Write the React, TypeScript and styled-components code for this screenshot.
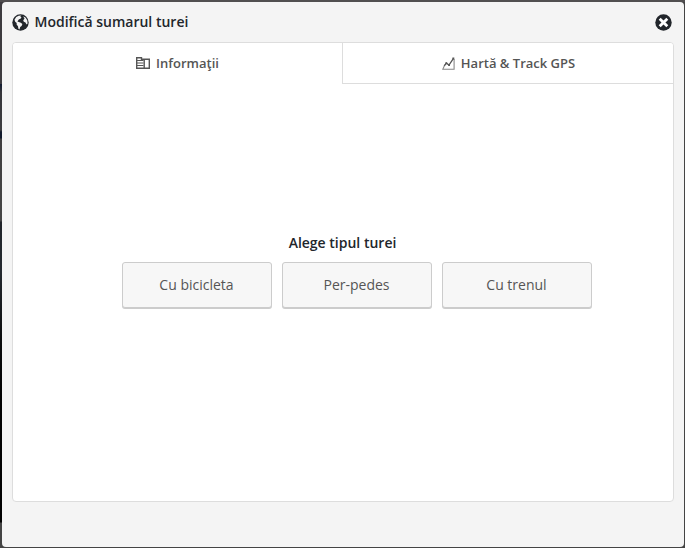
import React from "react";
import styled, { createGlobalStyle } from "styled-components";

const GlobalStyle = createGlobalStyle`
  * { box-sizing: border-box; }
  html, body, #root { height: 100%; }
  body {
    margin: 0;
    overflow: hidden;
    font-family: "Open Sans", sans-serif;
    color: #22262b;
  }
`;

const Backdrop = styled.div`
  height: 100%;
  padding: 2px 1px 1px 2px;
  background:
    linear-gradient(#514f50, #514f50) 0 0 / 100% 2px no-repeat,
    linear-gradient(#444, #444) 100% 0 / 4px 100% no-repeat,
    linear-gradient(#444, #444) 0 100% / 100% 4px no-repeat,
    linear-gradient(#3d3b3f 0, #3d3b3f 84px, #101a30 84px, #35353a 92px, #3d3d3f 130px, #111a2c 132px, #111a2c 138px, #403f40 139px, #444 221px, #20242a 222px, #252a30 270px, #0c0d0e 340px, #020202 400px, #020202 522px, #444 523px);
`;

const Dialog = styled.section`
  display: flex;
  flex-direction: column;
  height: 100%;
  padding: 0 10px 45px;
  background: #f4f4f4;
  border-radius: 4px;
`;

const Header = styled.header`
  display: flex;
  align-items: center;
  height: 40px;
  flex: none;
`;

const Title = styled.h1`
  flex: 1;
  margin: 0 0 0 5.5px;
  font-size: 14px;
  line-height: 20px;
  font-weight: 600;
`;

const CloseButton = styled.button`
  display: flex;
  margin: 0 2px 0 0;
  padding: 0;
  border: 0;
  background: none;
`;

const Panel = styled.div`
  display: flex;
  flex-direction: column;
  flex: 1;
  background: #fff;
  border: 1px solid #ddd;
  border-radius: 4px;
  overflow: hidden;
`;

const Tabs = styled.nav`
  display: flex;
  height: 41px;
  flex: none;
`;

const Tab = styled.button<{ $active?: boolean }>`
  flex: ${(p) => (p.$active ? "0 0 329px" : "1")};
  display: flex;
  align-items: center;
  justify-content: center;
  gap: 6px;
  padding: ${(p) => (p.$active ? "0 0 1px" : "0 0 0 1px")};
  border: 0;
  border-left: ${(p) => (p.$active ? "0" : "1px solid #ddd")};
  border-bottom: ${(p) => (p.$active ? "0" : "1px solid #ddd")};
  background: #fff;
  color: #555;
  font: 600 13px/20px "Open Sans", sans-serif;
`;

const Content = styled.main`
  display: flex;
  flex-direction: column;
  align-items: center;
  padding-top: 149px;
`;

const Prompt = styled.h2`
  margin: 0 1px 9px 0;
  font-size: 14px;
  line-height: 20px;
  font-weight: 600;
`;

const Choices = styled.div`
  display: flex;
  gap: 10px;
  margin-left: 28px;
`;

const Choice = styled.button`
  width: 150px;
  height: 46px;
  padding: 0 1px 1px 0;
  border: 1px solid #ccc;
  border-radius: 3px;
  box-shadow: 0 1px 0 #ccc;
  background: #f7f7f7;
  color: #555;
  font: 400 14px/20px "Open Sans", sans-serif;
`;

const GlobeIcon = () => (
  <svg width="17" height="17" viewBox="0 0 17 17">
    <circle cx="8.5" cy="8.5" r="8.2" fill="#22262b" />
    <path
      d="M4.2 3.1 6.6 1.7 9.4 1.5 8.3 2.5 9.5 3.6 8.2 5 7 5.2 6.1 6.5 5.4 7.4 6.8 8 8.8 8.7 10.4 10 9.6 12 8.2 13.1 7.5 15.4 6.4 14.8 6 12.2 4.6 10.6 4.7 9 3.2 7.7 2.5 5.8Z M11.2 2.2 13.7 3.8 15.3 6.4 15.6 9.5 14.5 10.4 13.5 8.5 11.8 7.8 11.2 6.2 12.5 4.8Z"
      fill="#f4f4f4"
    />
  </svg>
);

const CloseIcon = () => (
  <svg width="17" height="17" viewBox="0 0 17 17">
    <circle cx="8.5" cy="8.5" r="8.2" fill="#22262b" />
    <path d="m4.7 4.7 7.6 7.6m0-7.6-7.6 7.6" stroke="#fff" strokeWidth="2.8" />
  </svg>
);

const InfoIcon = () => (
  <svg width="14" height="12" viewBox="0 0 14 12" fill="none" stroke="#555">
    <path d="M.7 11.3V.7h4.8v1.6h7.8v9Z" strokeWidth="1.4" />
    <path d="M1 3.5h6.5M1 6h6.5M1 8.5h6.5" strokeWidth="1.2" />
    <path d="M8.2 2.5V11" strokeWidth="1.4" />
  </svg>
);

const ChartIcon = () => (
  <svg width="13" height="13" viewBox="0 0 13 13" fill="none">
    <path d="M2.7 8 .8 12.3h11.3V2" stroke="#888" strokeWidth="1.1" />
    <path d="m2.2 8.7 2.2-2.5 2.6 1.9L11.3 1.6" stroke="#555" strokeWidth="1.3" />
    <path d="M3.4 5.3h1.8v1.8H3.4ZM6.2 7.2H8V9H6.2ZM10.4.5h1.9v1.9h-1.9Z" fill="#555" />
  </svg>
);

const tourTypes = ["Cu bicicleta", "Per-pedes", "Cu trenul"];

export default function App() {
  return (
    <>
      <GlobalStyle />
      <Backdrop>
        <Dialog role="dialog" aria-labelledby="dialog-title">
          <Header>
            <GlobeIcon />
            <Title id="dialog-title">Modifică sumarul turei</Title>
            <CloseButton aria-label="Închide">
              <CloseIcon />
            </CloseButton>
          </Header>
          <Panel>
            <Tabs>
              <Tab $active>
                <InfoIcon />
                Informaţii
              </Tab>
              <Tab>
                <ChartIcon />
                Hartă &amp; Track GPS
              </Tab>
            </Tabs>
            <Content>
              <Prompt>Alege tipul turei</Prompt>
              <Choices>
                {tourTypes.map((type) => (
                  <Choice key={type}>{type}</Choice>
                ))}
              </Choices>
            </Content>
          </Panel>
        </Dialog>
      </Backdrop>
    </>
  );
}
